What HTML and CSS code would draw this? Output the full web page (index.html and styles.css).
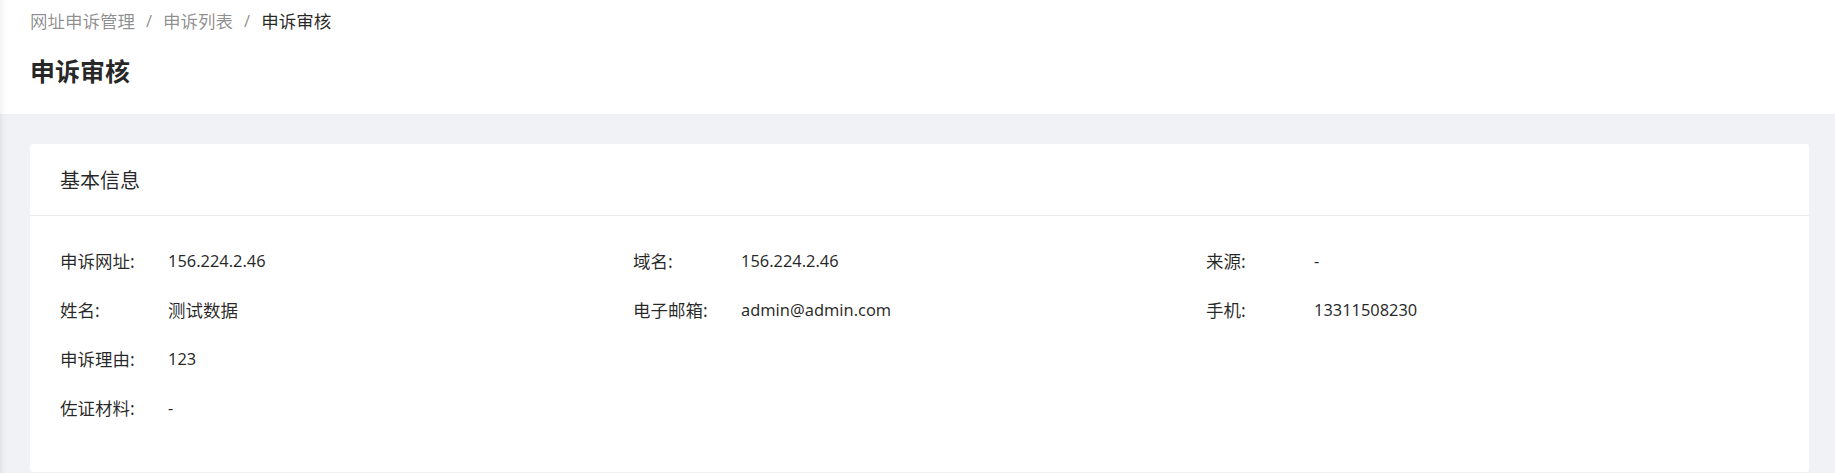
FILE: index.html
```html
<!DOCTYPE html>
<html lang="zh-CN">
<head>
<meta charset="utf-8">
<title>申诉审核</title>
<link rel="stylesheet" href="styles.css">
</head>
<body>
<div class="page">
  <header class="page-header">
    <nav class="breadcrumb">
      <span class="crumb">网址申诉管理</span>
      <span class="sep">/</span>
      <span class="crumb">申诉列表</span>
      <span class="sep">/</span>
      <span class="crumb current">申诉审核</span>
    </nav>
    <h1 class="page-title">申诉审核</h1>
  </header>
  <main class="content">
    <section class="card">
      <div class="card-head">基本信息</div>
      <div class="card-body">
        <div class="row">
          <div class="item"><span class="label">申诉网址:</span><span class="value">156.224.2.46</span></div>
          <div class="item"><span class="label">域名:</span><span class="value">156.224.2.46</span></div>
          <div class="item"><span class="label">来源:</span><span class="value">-</span></div>
        </div>
        <div class="row">
          <div class="item"><span class="label">姓名:</span><span class="value cjk">测试数据</span></div>
          <div class="item"><span class="label">电子邮箱:</span><span class="value">admin@admin.com</span></div>
          <div class="item"><span class="label">手机:</span><span class="value">13311508230</span></div>
        </div>
        <div class="row">
          <div class="item"><span class="label">申诉理由:</span><span class="value">123</span></div>
        </div>
        <div class="row">
          <div class="item"><span class="label">佐证材料:</span><span class="value">-</span></div>
        </div>
      </div>
    </section>
  </main>
</div>
</body>
</html>
```
FILE: styles.css
```css
* { box-sizing: border-box; }
html, body { margin: 0; padding: 0; }
body {
  font-family: "Noto Sans", "Noto Sans CJK SC", sans-serif;
  color: rgba(0,0,0,0.85);
  background: #f0f2f5;
}
.page {
  min-height: 473px;
  background: #f0f2f5;
  box-shadow: inset 8px 0 8px -8px rgba(0,0,0,0.12);
}
.page-header {
  height: 114px;
  background: #fff;
  padding: 8px 30px 0 30px;
  box-shadow: inset 8px 0 8px -8px rgba(0,0,0,0.10);
}
.breadcrumb {
  display: flex;
  align-items: center;
  font-size: 17.5px;
  line-height: 26px;
  height: 26px;
  color: rgba(0,0,0,0.45);
}
.sep { margin: 0 11px; font-size: 16.4px; }
.crumb.current { color: rgba(0,0,0,0.85); }
.page-title {
  margin: 20px 0 0 0;
  font-size: 25px;
  line-height: 34px;
  font-weight: 700;
  color: rgba(0,0,0,0.85);
}
.content {
  padding: 30px 26px 3px 30px;
}
.card {
  background: #fff;
  border-radius: 3px;
}
.card-head {
  height: 72px;
  padding: 0 30px;
  display: flex;
  align-items: center;
  font-size: 20px;
  color: rgba(0,0,0,0.85);
  border-bottom: 1px solid #ebebeb;
}
.card-body {
  padding: 20px 30px 40px 30px;
  font-size: 16.4px;
}
.row {
  display: grid;
  grid-template-columns: repeat(3, 1fr);
  height: 49px;
  align-items: center;
}
.item { display: flex; align-items: center; }
.label {
  width: 108px;
  flex: none;
  font-size: 17.5px;
  color: rgba(0,0,0,0.85);
}
.value { color: rgba(0,0,0,0.85); }
.value.cjk { font-size: 17.5px; }
```
